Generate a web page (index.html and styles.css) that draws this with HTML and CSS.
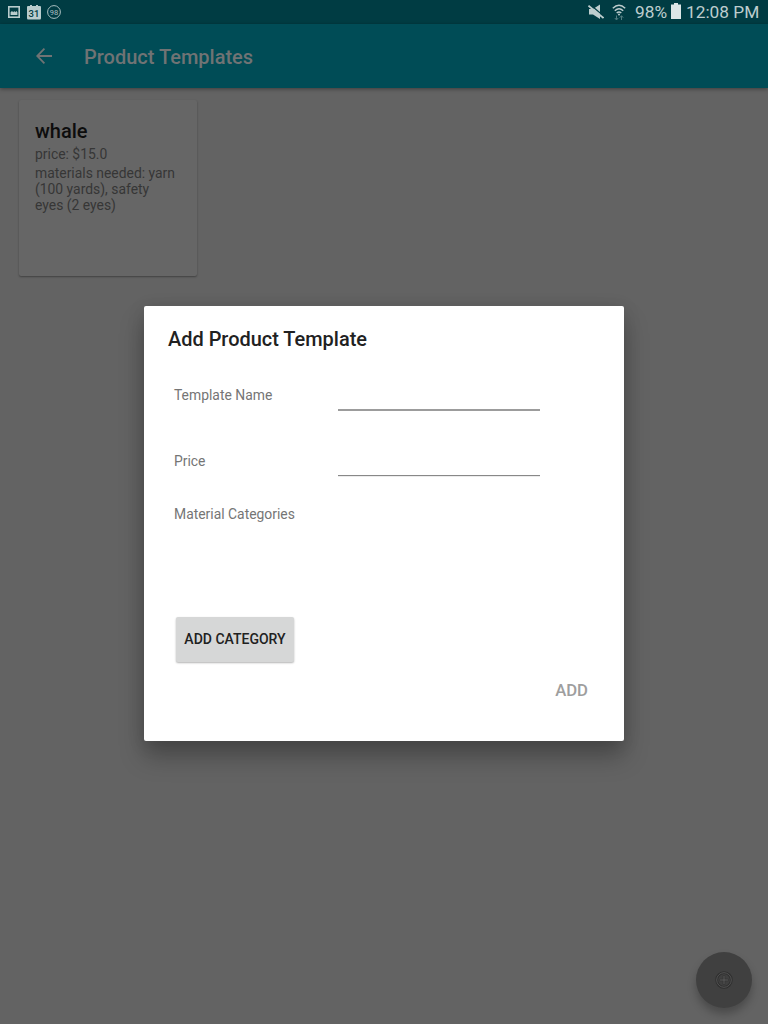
FILE: index.html
```html
<!DOCTYPE html>
<html lang="en">
<head>
<meta charset="utf-8">
<title>Product Templates</title>
<link rel="stylesheet" href="styles.css">
</head>
<body>
<div class="screen">
  <header class="status">
    <div class="status-left">
      <svg width="12" height="12" viewBox="0 0 12 12"><rect x=".8" y=".8" width="10.4" height="10.4" fill="none" stroke="#b9cccd" stroke-width="1.6"/><path d="M2.600 9V6.300L4 5l1.200 1.200L6.200 5l1 1.200L8.300 5l1.100 1.300V9z" fill="#b9cccd"/></svg>
      <svg class="calendar" width="14" height="15" viewBox="0 0 14 15"><path d="M1 1h2V0h2v1h4V0h2v1h2q1 0 1 1v11q0 1.500-1 1.500H1Q0 14.500 0 13V2q0-1 1-1z" fill="#b9cccd"/><text x="7" y="11.500" text-anchor="middle" class="calendar-day">31</text></svg>
      <svg class="level" width="14" height="14" viewBox="0 0 14 14"><circle cx="7" cy="7" r="6.400" fill="none" stroke="#a9bfc0" stroke-width="1"/><text x="7" y="9.700" text-anchor="middle" class="level-text">98</text></svg>
    </div>
    <div class="status-right">
      <svg class="mute" width="16" height="16" viewBox="0 0 16 16"><path d="M1 5h4l7-4.500V15L5 10.500H1z" fill="#bdcdce"/><path d="M1.500 0L16 12.300" stroke="#003c43" stroke-width="1.300"/><path d="M.5 1.700L15.500 14" stroke="#bdcdce" stroke-width="1.700"/></svg>
      <svg class="wifi" width="14" height="17" viewBox="0 0 14 17"><g fill="none" stroke="#bdcdce" stroke-width="1.400"><path d="M.8 4.200Q7-1.800 13.200 4.200"/><path d="M2.800 6.700q4.200-4 8.400 0"/><path d="M4.700 9q2.300-2.200 4.600 0"/></g><circle cx="7" cy="10.500" r="1" fill="#bdcdce"/><path d="M4.500 11.500v4M2.800 14l1.700 2 1.700-2M9.500 16v-4M7.800 13.700l1.700-2 1.700 2" stroke="#537d82" fill="none"/></svg>
      <span class="percent">98%</span>
      <svg class="battery" width="10" height="16" viewBox="0 0 10 16"><path d="M3 0h4v1.500h3V16H0V1.500h3z" fill="#dce5e6"/></svg>
      <span class="clock">12:08 PM</span>
    </div>
  </header>
  <nav class="toolbar">
    <svg class="back" width="16" height="16" viewBox="0 0 16 16"><path d="M16 8H1.400M8.400.7L1.200 8l7.200 7.300" fill="none" stroke="#707374" stroke-width="1.800"/></svg>
    <h1 class="toolbar-title">Product Templates</h1>
  </nav>
  <main class="content">
    <article class="card">
      <h2 class="card-name">whale</h2>
      <p class="card-price">price: $15.0</p>
      <p class="card-materials">materials needed: yarn<br>(100 yards), safety<br>eyes (2 eyes)</p>
    </article>
  </main>
  <section class="dialog">
    <h2 class="dialog-title">Add Product Template</h2>
    <label class="field"><span class="label">Template Name</span><input class="input focused"></label>
    <label class="field price-field"><span class="label">Price</span><input class="input"></label>
    <div class="label categories">Material Categories</div>
    <button class="category-button">ADD CATEGORY</button>
    <div class="actions"><button class="add-button">ADD</button></div>
  </section>
  <button class="fab" aria-label="Add template">
    <svg width="18" height="18" viewBox="0 0 18 18" fill="none"><circle cx="9" cy="9" r="7.300" stroke="#2f2f2f" stroke-width="2.800"/><circle cx="9" cy="9" r="7.300" stroke="#525252" stroke-width="1"/><path d="M9 4.500v9M4.500 9h9" stroke="#333" stroke-width="2.600"/><path d="M9 5v8M5 9h8" stroke="#5a5a5a" stroke-width="1"/></svg>
  </button>
</div>
</body>
</html>
```
FILE: styles.css
```css
* { box-sizing: border-box; }
body { margin: 0; font-family: Roboto, "Liberation Sans", sans-serif; }
h1, h2, p { margin: 0; }
button, input { font-family: inherit; border: 0; padding: 0; }
svg { display: block; flex: none; }

.screen { position: relative; width: 768px; height: 1024px; overflow: hidden; background: #636363; }

.status { display: flex; justify-content: space-between; height: 24px; background: #003c43; }
.status-left { display: flex; align-items: center; padding-left: 8px; }
.calendar { margin: 1px 0 0 7px; }
.level { margin-left: 6px; }
.calendar-day { font-size: 9.5px; font-weight: 500; fill: #003c43; }
.level-text { font-size: 7.5px; fill: #a9bfc0; }
.status-right { display: flex; align-items: center; padding-right: 8px; color: #bdcdce; font-size: 17.3px; line-height: 24px; white-space: nowrap; }
.wifi { margin: 1px 9px 0 8px; }
.percent { width: 36px; }
.battery { margin: -2px 5px 0 0; }
.clock { width: 74px; }

.toolbar { position: relative; display: flex; align-items: center; height: 64px; padding-left: 36px; background: #004c56; box-shadow: 0 1px 4px rgba(0, 0, 0, .4); }
.toolbar-title { margin: 1px 0 0 32px; font-size: 20px; font-weight: 500; line-height: 24px; color: #707374; }

.content { padding: 12px 19px; }
.card { width: 178px; height: 176px; padding: 19px 16px; border-radius: 2px; background: #666; box-shadow: 0 1px 2px rgba(0, 0, 0, .35); color: #363636; font-size: 13.9px; line-height: 16px; white-space: nowrap; }
.card-name { font-size: 20px; font-weight: 500; line-height: 24px; color: #0d0d0d; }
.card-price { margin-top: 3px; }
.card-materials { margin-top: 3px; }

.dialog { position: absolute; left: 144px; top: 306px; width: 480px; height: 435px; padding: 21px 24px; border-radius: 2px; background: #fff; box-shadow: 0 16px 24px rgba(0, 0, 0, .26), 0 3px 18px rgba(0, 0, 0, .12); }
.dialog-title { font-size: 19.95px; font-weight: 500; line-height: 24px; color: #212121; }
.field { display: flex; height: 35px; margin: 25px 0 0 6px; }
.label { width: 164px; padding-top: 11px; font-size: 13.9px; line-height: 16px; color: #757575; }
.price-field { margin-top: 31px; }
.input { width: 202px; height: 35px; outline: 0; background: transparent; border-bottom: 1px solid #888; border-radius: 0; }
.price-field .input { height: 34px; box-shadow: 0 1px #ececec; }
.focused { height: 35px; border-bottom: 2px solid #9c9c9c; }
.categories { margin: 18px 0 0 6px; }
.category-button { display: block; width: 118px; height: 45px; margin: 95px 0 0 8px; padding-bottom: 1px; border-radius: 2px; background: #d6d7d7; box-shadow: 0 1px 2px rgba(0, 0, 0, .3); color: #212121; font-size: 14px; font-weight: 500; white-space: nowrap; }
.actions { display: flex; justify-content: flex-end; margin: 18px 12px 0 0; }
.add-button { background: transparent; color: #9e9e9e; font-size: 16.7px; font-weight: 500; line-height: 22px; }

.fab { position: absolute; left: 696px; top: 952px; display: grid; place-items: center; width: 56px; height: 56px; border-radius: 50%; background: #404040; box-shadow: 0 6px 9px rgba(0, 0, 0, .25); }
```
